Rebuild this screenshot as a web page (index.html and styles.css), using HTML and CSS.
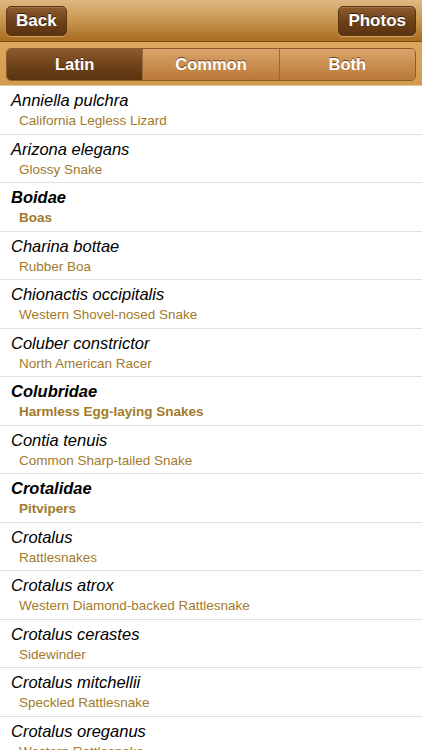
FILE: index.html
```html
<!DOCTYPE html>
<html>
<head>
<meta charset="utf-8">
<link rel="stylesheet" href="styles.css">
</head>
<body>
<div class="app">
  <header class="nav">
    <button class="navbtn">Back</button>
    <button class="navbtn">Photos</button>
  </header>
  <div class="segbar">
    <div class="seg">
      <div class="segitem active">Latin</div>
      <div class="segitem">Common</div>
      <div class="segitem">Both</div>
    </div>
  </div>
  <ul class="list">
    <li class="row"><div class="latin">Anniella pulchra</div><div class="common">California Legless Lizard</div></li>
    <li class="row"><div class="latin">Arizona elegans</div><div class="common">Glossy Snake</div></li>
    <li class="row fam"><div class="latin">Boidae</div><div class="common">Boas</div></li>
    <li class="row"><div class="latin">Charina bottae</div><div class="common">Rubber Boa</div></li>
    <li class="row"><div class="latin">Chionactis occipitalis</div><div class="common">Western Shovel-nosed Snake</div></li>
    <li class="row"><div class="latin">Coluber constrictor</div><div class="common">North American Racer</div></li>
    <li class="row fam"><div class="latin">Colubridae</div><div class="common">Harmless Egg-laying Snakes</div></li>
    <li class="row"><div class="latin">Contia tenuis</div><div class="common">Common Sharp-tailed Snake</div></li>
    <li class="row fam"><div class="latin">Crotalidae</div><div class="common">Pitvipers</div></li>
    <li class="row"><div class="latin">Crotalus</div><div class="common">Rattlesnakes</div></li>
    <li class="row"><div class="latin">Crotalus atrox</div><div class="common">Western Diamond-backed Rattlesnake</div></li>
    <li class="row"><div class="latin">Crotalus cerastes</div><div class="common">Sidewinder</div></li>
    <li class="row"><div class="latin">Crotalus mitchellii</div><div class="common">Speckled Rattlesnake</div></li>
    <li class="row"><div class="latin">Crotalus oreganus</div><div class="common">Western Rattlesnake</div></li>
  </ul>
</div>
</body>
</html>
```
FILE: styles.css
```css
html, body {
  margin: 0;
  padding: 0;
  background: #ffffff;
}
.app {
  width: 422px;
  height: 750px;
  overflow: hidden;
  font-family: "Liberation Sans", Arial, sans-serif;
}
.nav {
  height: 42px;
  box-sizing: border-box;
  padding: 0 6px;
  display: flex;
  justify-content: space-between;
  align-items: center;
  background: linear-gradient(#ddb883, #c8964f 50%, #a76c1f);
  border-bottom: 1px solid #7a4e18;
}
.navbtn {
  height: 30px;
  padding: 0 9px;
  border: 1px solid #5a3510;
  border-radius: 5px;
  background: linear-gradient(#8e5c30, #6b3f18 55%, #5c3312);
  box-shadow: inset 0 1px 0 rgba(255,255,255,0.15), 0 1px 0 rgba(255,230,180,0.4);
  color: #ffffff;
  font-family: "Liberation Sans", Arial, sans-serif;
  font-weight: bold;
  font-size: 17px;
  text-shadow: 0 -1px 0 rgba(0,0,0,0.6);
}
.segbar {
  height: 44px;
  box-sizing: border-box;
  padding: 6px;
  background: linear-gradient(#dca75f, #d49b4e);
  border-bottom: 1px solid #e3c89c;
}
.seg {
  display: flex;
  height: 31px;
  border: 1px solid #8a5c2c;
  border-radius: 5px;
  overflow: hidden;
}
.segitem {
  flex: 1;
  display: flex;
  align-items: center;
  justify-content: center;
  color: #ffffff;
  font-weight: bold;
  font-size: 16.5px;
  text-shadow: 0 -1px 0 rgba(60,30,0,0.7);
  background: linear-gradient(#d9a46c, #c98e50 50%, #b97a3a);
  border-left: 1px solid #9a6a38;
}
.segitem:first-child {
  border-left: none;
}
.segitem.active {
  background: linear-gradient(#8c5a30, #6e4218 55%, #5a3310);
}
.list {
  list-style: none;
  margin: 0;
  padding: 0;
}
.row {
  height: 48.5px;
  box-sizing: border-box;
  border-bottom: 1px solid #e0e0e0;
  padding: 4px 0 0 11px;
}
.latin {
  font-style: italic;
  font-size: 16.5px;
  color: #000000;
  line-height: 21px;
}
.common {
  font-size: 13.5px;
  color: #a27a2a;
  padding-left: 8px;
  line-height: 19px;
}
.fam .latin {
  font-weight: bold;
}
.fam .common {
  font-weight: bold;
}
```
